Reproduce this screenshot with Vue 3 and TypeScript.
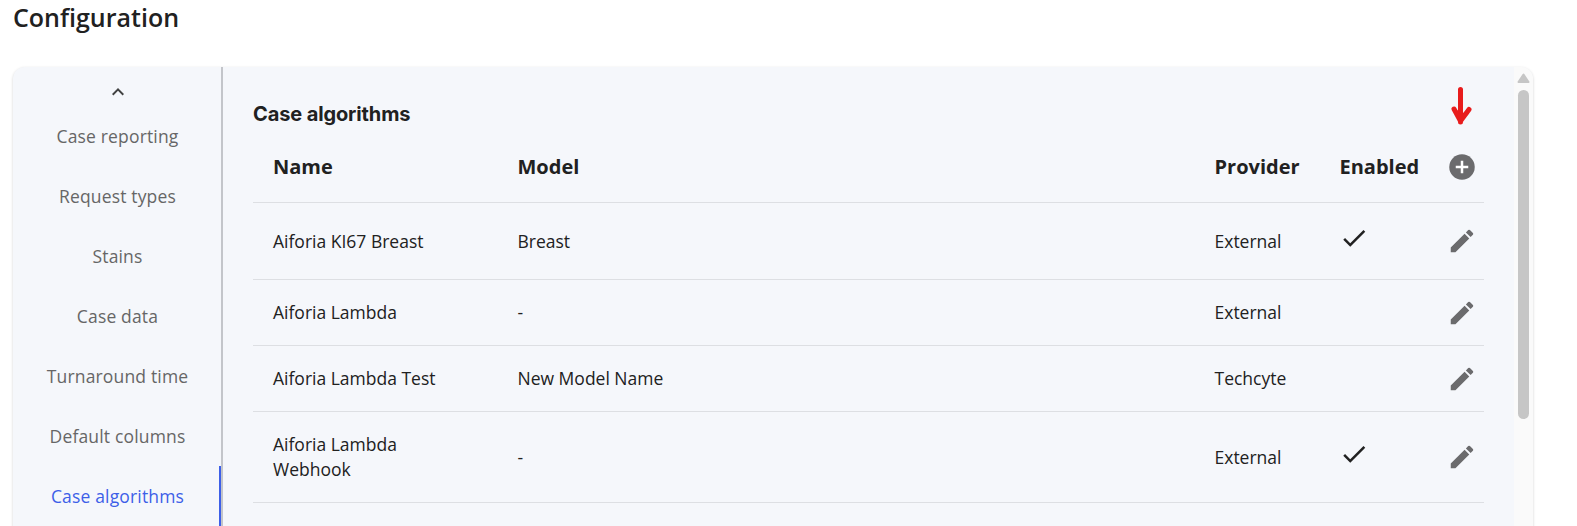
<script setup lang="ts">
interface Algorithm {
  name: string
  model: string
  provider: string
  enabled: boolean
  height: number
}

const tabs: string[] = [
  'Case reporting',
  'Request types',
  'Stains',
  'Case data',
  'Turnaround time',
  'Default columns',
  'Case algorithms',
]
const activeTab = 'Case algorithms'

const algorithms: Algorithm[] = [
  { name: 'Aiforia KI67 Breast', model: 'Breast', provider: 'External', enabled: true, height: 77 },
  { name: 'Aiforia Lambda', model: '-', provider: 'External', enabled: false, height: 66 },
  { name: 'Aiforia Lambda Test', model: 'New Model Name', provider: 'Techcyte', enabled: false, height: 66 },
  { name: 'Aiforia Lambda Webhook', model: '-', provider: 'External', enabled: true, height: 91 },
]
</script>

<template>
  <div class="page">
    <h1 class="title">Configuration</h1>
    <div class="card">
      <nav class="tabs">
        <button class="scroll-up" aria-label="Scroll up">
          <svg width="24" height="24" viewBox="0 0 24 24"><path d="M7.41 15.41 12 10.83l4.59 4.58L18 14l-6-6-6 6z" /></svg>
        </button>
        <a v-for="tab in tabs" :key="tab" class="tab" :class="{ active: tab === activeTab }">{{ tab }}</a>
      </nav>
      <main class="content">
        <h2 class="heading">Case algorithms</h2>
        <div class="table">
          <div class="row head">
            <span>Name</span>
            <span>Model</span>
            <span>Provider</span>
            <span>Enabled</span>
            <span class="action">
              <svg class="arrow" width="24" height="42" viewBox="0 0 24 42">
                <path d="M11.500 4.500V37M5 24l6.500 12M20 24.500 11.500 36M7 27l4.500 8 6-7" />
              </svg>
              <svg class="icon" width="30" height="30" viewBox="0 0 24 24">
                <circle cx="12" cy="12" r="10.200" />
                <path class="plus" d="M12 7v10M7 12h10" />
              </svg>
            </span>
          </div>
          <div v-for="item in algorithms" :key="item.name" class="row" :style="{ height: item.height + 'px' }">
            <span class="name">{{ item.name }}</span>
            <span>{{ item.model }}</span>
            <span>{{ item.provider }}</span>
            <span class="enabled">
              <svg v-if="item.enabled" width="30" height="30" viewBox="0 0 24 24">
                <path d="M9 16.17 4.83 12l-1.42 1.41L9 19 21 7l-1.41-1.41z" />
              </svg>
            </span>
            <span class="action">
              <svg class="icon" width="30" height="30" viewBox="0 0 24 24">
                <path d="M3 17.25V21h3.750L17.810 9.940l-3.750-3.750L3 17.250zM20.710 7.040c.39-.39.39-1.020 0-1.410l-2.340-2.340a.996.996 0 0 0-1.410 0l-1.830 1.830 3.750 3.750 1.830-1.830z" />
              </svg>
            </span>
          </div>
        </div>
      </main>
      <div class="scrollbar">
        <svg width="13" height="11" viewBox="0 0 13 11"><path d="M6.500 1.500 11.500 9H1.500z" /></svg>
        <div class="thumb"></div>
      </div>
    </div>
  </div>
</template>

<style>
body {
  margin: 0;
  background: #fff;
}
</style>

<style scoped>
.page {
  box-sizing: border-box;
  width: 1577px;
  height: 526px;
  overflow: hidden;
  padding-left: 13px;
  font-family: 'Open Sans', 'Noto Sans', sans-serif;
  color: #212121;
}
.title {
  margin: 0;
  height: 67px;
  font-size: 25px;
  font-weight: 600;
  line-height: 34px;
}
.card {
  display: flex;
  width: 1520px;
  height: 500px;
  border-radius: 12px;
  overflow: hidden;
  background: #f5f7fb;
  box-shadow: 0 1px 3px rgba(0, 0, 0, 0.18);
}
.tabs {
  box-sizing: border-box;
  width: 210px;
  flex: none;
  display: flex;
  flex-direction: column;
  border-right: 2px solid #c3c5ca;
}
.scroll-up {
  display: flex;
  justify-content: center;
  height: 39px;
  padding: 13px 0 0 2px;
  border: 0;
  background: none;
}
.scroll-up svg {
  fill: #424242;
}
.tab {
  flex: none;
  display: flex;
  align-items: center;
  justify-content: center;
  height: 60px;
  padding-left: 1px;
  font-size: 17.5px;
  letter-spacing: 0.16px;
  color: #666;
}
.tab.active {
  color: #3d5fe8;
  box-shadow: inset -2px 0 #3d5fe8;
}
.content {
  flex: 1;
  padding: 0 30px;
}
.heading {
  margin: 34px 0 18px;
  font: 700 20px/26px Inter, sans-serif;
  letter-spacing: -0.12px;
}
.row {
  box-sizing: border-box;
  display: grid;
  grid-template-columns: 244.500px 697px 125px 107.500px 1fr;
  align-items: center;
  width: 1231px;
  padding-left: 20px;
  border-bottom: 1px solid #dddfe3;
  font-size: 17.5px;
  line-height: 25px;
}
.head {
  height: 58px;
  padding-bottom: 15px;
  font-size: 20px;
  font-weight: 700;
}
.name {
  max-width: 205px;
}
.row svg {
  display: block;
}
.enabled svg {
  margin: -6px 0 0 -1px;
  fill: #212121;
}
.action {
  position: relative;
}
.head .icon {
  margin-top: 2px;
}
.icon {
  fill: #6b6b6d;
}
.plus {
  fill: none;
  stroke: #fff;
  stroke-width: 2;
}
.arrow {
  position: absolute;
  bottom: 55px;
  left: 2px;
  fill: none;
  stroke: #e81c1c;
  stroke-width: 5;
  stroke-linecap: round;
  stroke-linejoin: round;
}
.scrollbar {
  flex: none;
  width: 19px;
  display: flex;
  flex-direction: column;
  align-items: center;
  background: #fafafa;
}
.scrollbar svg {
  margin: 6px 0;
  fill: #c6c6c6;
  stroke: #c6c6c6;
  stroke-width: 2;
  stroke-linejoin: round;
}
.thumb {
  width: 11px;
  height: 329px;
  border-radius: 6px;
  background: #c6c6c6;
}
</style>
